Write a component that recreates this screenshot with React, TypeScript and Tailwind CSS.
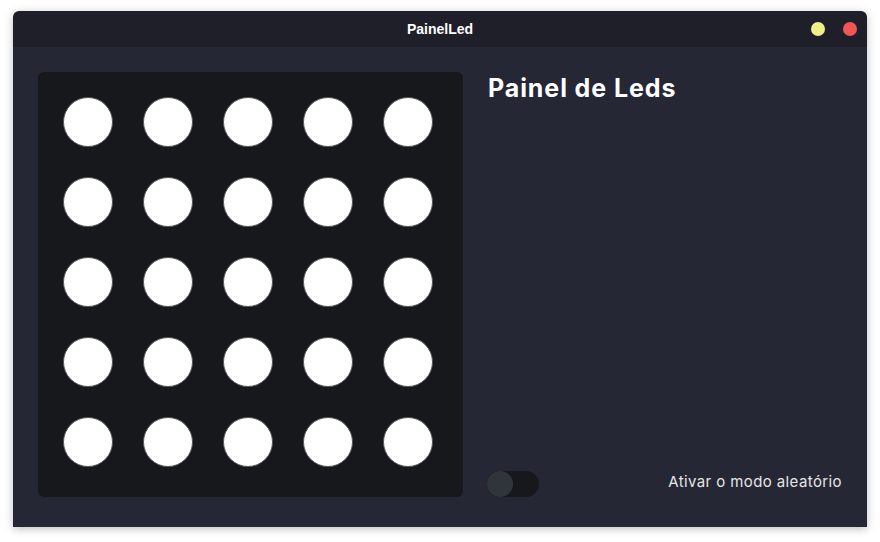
const leds = Array.from({ length: 25 }, (_, i) => i);

export default function App() {
	return (
		<div className="w-[880px] h-[542px] bg-white pt-[11px] pl-[13px]">
			<div className="w-[854px] h-[516px] flex flex-col rounded-t-[6px] overflow-hidden shadow-[0_2px_8px_rgba(0,0,0,0.25)]">
				<div className="h-[36px] bg-[#1f1f29] flex items-center relative shrink-0">
					<span className="w-full text-center text-white text-[14px] font-bold font-['Liberation_Sans',sans-serif]">
						PainelLed
					</span>
					<div className="absolute right-[10px] top-[11px] flex gap-[18px]">
						<span className="w-[14px] h-[14px] rounded-full bg-[#eef08a]" />
						<span className="w-[14px] h-[14px] rounded-full bg-[#f25555]" />
					</div>
				</div>
				<div className="flex-1 bg-[#252734] flex pl-[25px] pt-[25px] pr-[25px] pb-[30px] gap-[25px]">
					<div className="w-[425px] h-[425px] bg-[#16181b] rounded-[6px] pl-[25px] pt-[25px] grid grid-cols-[repeat(5,50px)] grid-rows-[repeat(5,50px)] gap-[30px]">
						{leds.map((i) => (
							<div key={i} className="w-[50px] h-[50px] rounded-full bg-white border border-[#555]" />
						))}
					</div>
					<div className="flex-1 flex flex-col justify-between font-['Inter',sans-serif]">
						<h1 className="text-white text-[25px] font-bold leading-none mt-[4px] tracking-[0.9px]">
							Painel de Leds
						</h1>
						<div className="flex items-center justify-between">
							<button className="w-[52px] h-[26px] -ml-[1px] rounded-full bg-[#16181b] flex items-center">
								<span className="w-[26px] h-[26px] rounded-full bg-[#30353b]" />
							</button>
							<span className="text-[#e6e6e6] text-[15px] mb-[3px] tracking-[0.4px]">Ativar o modo aleatório</span>
						</div>
					</div>
				</div>
			</div>
		</div>
	);
}
